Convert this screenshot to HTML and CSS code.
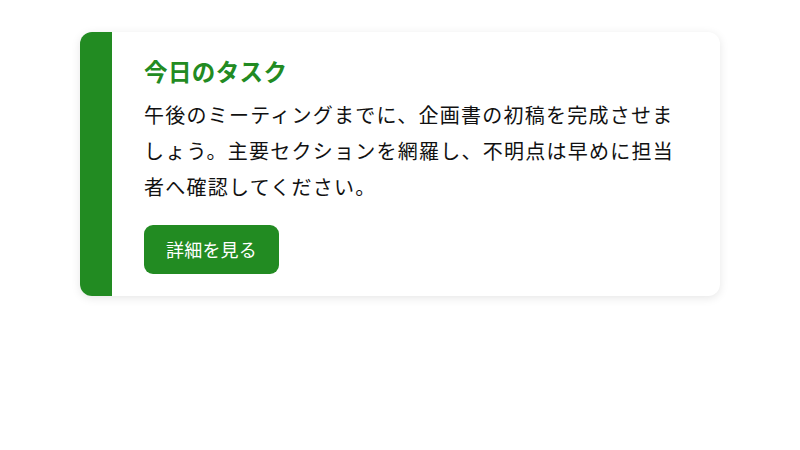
FILE: index.html
```html
<!DOCTYPE html>
<html lang="ja">
<head>
<meta charset="utf-8">
<title>今日のタスク</title>
<link rel="stylesheet" href="styles.css">
</head>
<body>
<div class="page">
  <div class="card">
    <div class="accent"></div>
    <div class="content">
      <h2 class="title">今日のタスク</h2>
      <p class="text">午後のミーティングまでに、企画書の初稿を完成させましょう。主要セクションを網羅し、不明点は早めに担当者へ確認してください。</p>
      <button class="btn">詳細を見る</button>
    </div>
  </div>
</div>
</body>
</html>
```

FILE: styles.css
```css
html, body {
  margin: 0;
  padding: 0;
  background: #ffffff;
}
body {
  font-family: "Noto Sans CJK JP", "Noto Sans", sans-serif;
  color: #1a1a1a;
}
.page {
  padding: 32px 80px;
}
.card {
  display: flex;
  background: #ffffff;
  border-radius: 12px;
  overflow: hidden;
  box-shadow: 0 2px 10px rgba(0, 0, 0, 0.10);
}
.accent {
  width: 32px;
  flex: 0 0 32px;
  background: #228b22;
}
.content {
  flex: 1;
  padding: 23px 32px 22px 32px;
}
.title {
  margin: 0;
  font-size: 23.5px;
  letter-spacing: 0.4px;
  line-height: 1.38;
  font-weight: 700;
  color: #228b22;
}
.text {
  margin: 10px 0 0 0;
  font-size: 20px;
  letter-spacing: 1.25px;
  line-height: 1.78;
  color: #111111;
}
.btn {
  margin-top: 21px;
  display: inline-block;
  font-family: inherit;
  font-size: 18px;
  letter-spacing: 0.2px;
  line-height: 25px;
  padding: 12px 22px;
  color: #ffffff;
  background: #228b22;
  border: none;
  border-radius: 9px;
}
```
